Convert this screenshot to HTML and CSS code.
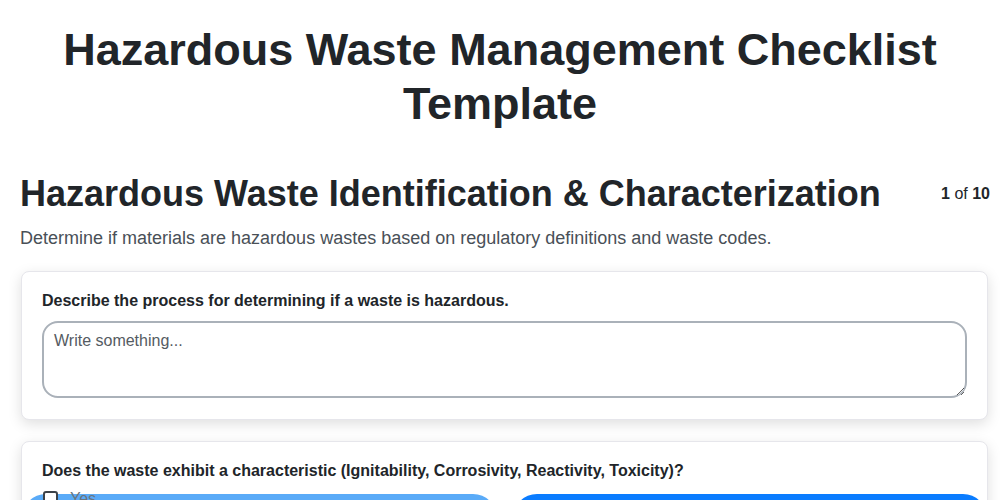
FILE: index.html
```html
<!DOCTYPE html>
<html lang="en">
<head>
  <meta charset="utf-8">
  <title>Hazardous Waste Management Checklist Template</title>
  <link rel="stylesheet" href="styles.css">
</head>
<body>
  <h1 class="page-title">Hazardous Waste Management Checklist Template</h1>

  <div class="section">
    <div class="section-head">
      <h2 class="section-title">Hazardous Waste Identification &amp; Characterization</h2>
      <div class="section-count"><b>1</b> of <b>10</b></div>
    </div>
    <p class="section-desc">Determine if materials are hazardous wastes based on regulatory definitions and waste codes.</p>

    <div class="card">
      <label class="q-label" for="q1">Describe the process for determining if a waste is hazardous.</label>
      <textarea class="q-text" id="q1" placeholder="Write something..."></textarea>
    </div>

    <div class="card">
      <div class="q-label">Does the waste exhibit a characteristic (Ignitability, Corrosivity, Reactivity, Toxicity)?</div>
      <div class="options">
        <label class="option option-yes"><span class="option-inner"><span class="box"></span>Yes</span></label>
        <label class="option option-no"><span class="option-inner"><span class="box"></span>No</span></label>
      </div>
    </div>
  </div>
</body>
</html>
```

FILE: styles.css
```css
html, body {
  margin: 0;
  padding: 0;
}
body {
  background: #fff;
  color: #212529;
  font-family: 'Liberation Sans', Arial, sans-serif;
  overflow: hidden;
}
.page-title {
  margin: 23px 0 0;
  font-size: 45px;
  line-height: 1.2;
  font-weight: bold;
  text-align: center;
}
.section {
  padding: 41px 10px 0 20px;
}
.section-head {
  display: flex;
  align-items: center;
  justify-content: space-between;
}
.section-title {
  margin: 0;
  font-size: 36px;
  line-height: 1.2;
  font-weight: bold;
}
.section-count {
  font-size: 16px;
  color: #212529;
}
.section-desc {
  margin: 10px 0 19px;
  font-size: 18px;
  line-height: 1.5;
  color: #495057;
}
.card {
  margin: 0 2px 21px 1px;
  padding: 19px 20px 21px;
  background: #fff;
  border: 1px solid #e6e6eb;
  border-radius: 8px;
  box-shadow: 0 4px 14px rgba(0, 0, 0, 0.13);
}
.q-label {
  display: block;
  margin-bottom: 11px;
  font-size: 16px;
  line-height: 1.2;
  font-weight: bold;
}
.q-text {
  display: block;
  box-sizing: border-box;
  width: 100%;
  height: 77px;
  margin: 0;
  padding: 9px 10px;
  border: 2px solid #aab1b9;
  border-radius: 16px;
  font-family: 'Liberation Sans', Arial, sans-serif;
  font-size: 16px;
  color: #212529;
  resize: vertical;
}
.q-text::placeholder {
  color: #555b62;
}
.options {
  display: grid;
  grid-template-columns: 1fr 1fr;
  gap: 16px;
  margin: 13px -20px 0;
}
.option {
  display: block;
  height: 48px;
  border-radius: 24px;
  padding: 0 21px;
  font-size: 16px;
  color: #6c757d;
}
.option-yes {
  background: #5aabf8;
}
.option-no {
  background: #0a7cff;
  color: #fff;
}
.option-inner {
  display: flex;
  align-items: center;
  gap: 12px;
  margin-top: -4px;
}
.option-no .option-inner {
  margin-top: 14px;
}
.box {
  width: 11px;
  height: 11px;
  border: 2px solid #3c4249;
  border-radius: 3px;
  background: #fff;
}
```
